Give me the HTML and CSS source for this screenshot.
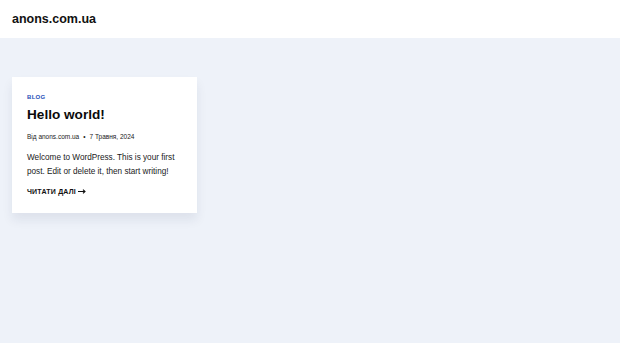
FILE: index.html
```html
<!DOCTYPE html>
<html lang="uk">
<head>
  <meta charset="UTF-8">
  <meta name="viewport" content="width=device-width, initial-scale=1.0">
  <title>anons.com.ua</title>
  <link rel="stylesheet" href="styles.css">
</head>
<body>
  <header class="site-header">
    <a class="site-title" href="#">anons.com.ua</a>
  </header>

  <main class="site-main">
    <article class="post-card">
      <a class="post-category" href="#">BLOG</a>
      <h2 class="post-title">Hello world!</h2>
      <div class="post-meta">
        <span>Від anons.com.ua</span>
        <span class="dot">•</span>
        <span>7 Травня, 2024</span>
      </div>
      <p class="post-excerpt">Welcome to WordPress. This is your first post. Edit or delete it, then start writing!</p>
      <a class="read-more" href="#">ЧИТАТИ ДАЛІ
        <svg class="arrow" width="8" height="5" viewBox="0 0 8 5"><path d="M0 2.5h7M5 0.6l2 1.9-2 1.9" fill="none" stroke="#111" stroke-width="1.1"/></svg>
      </a>
    </article>
  </main>
</body>
</html>
```

FILE: styles.css
```css
body {
  margin: 0;
  padding: 0;
  font-family: "Liberation Sans", Arial, sans-serif;
  background-color: #eef2f9;
  color: #111;
  min-height: 100vh;
}

a {
  text-decoration: none;
  color: inherit;
}

.site-header {
  background: white;
  height: 38px;
  display: flex;
  align-items: center;
  padding: 0 12px;
}

.site-title {
  font-size: 12.5px;
  font-weight: bold;
  color: #111;
  margin-top: -1px;
}

.site-main {
  padding: 39px 12px;
}

.post-card {
  background: white;
  width: 155px;
  padding: 17px 15px 18px;
  box-shadow: 0 7px 10px rgba(20, 40, 80, 0.08);
}

.post-category {
  display: block;
  font-size: 6px;
  font-weight: bold;
  color: #1e4fb8;
  letter-spacing: 0.3px;
}

.post-title {
  margin: 5px 0 0;
  font-size: 13.6px;
  line-height: 20px;
  font-weight: bold;
  color: #0a0a0a;
}

.post-meta {
  margin-top: 8px;
  font-size: 6.5px;
  color: #222;
  display: flex;
  gap: 4px;
}

.post-excerpt {
  margin: 11px 0 0;
  font-size: 8.2px;
  line-height: 13.5px;
  color: #1a1a1a;
}

.read-more {
  display: flex;
  align-items: center;
  gap: 2px;
  margin-top: 10px;
  font-size: 7px;
  font-weight: bold;
  letter-spacing: 0.2px;
  color: #111;
}
```
